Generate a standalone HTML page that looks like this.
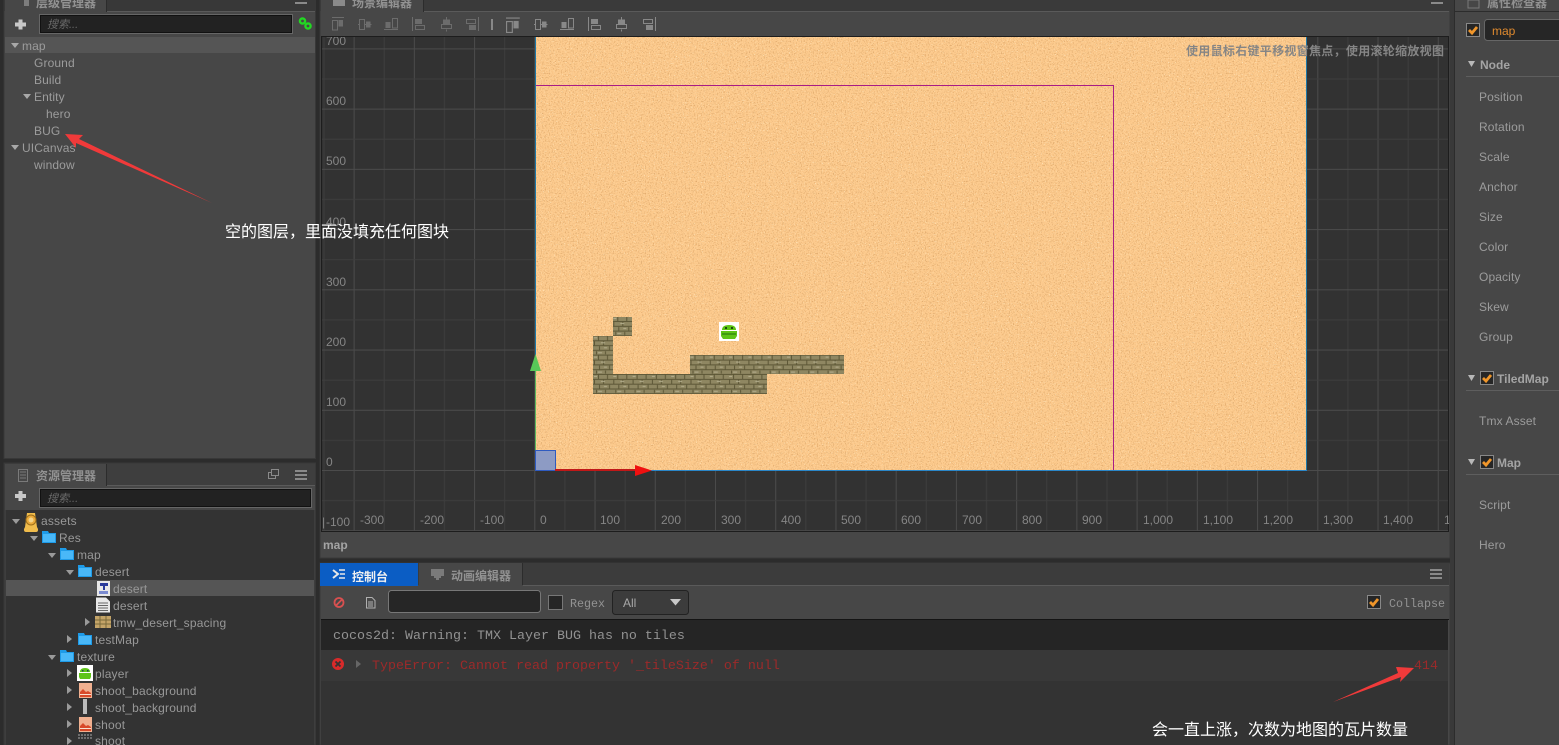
<!DOCTYPE html>
<html><head><meta charset="utf-8"><style>
html,body{margin:0;padding:0;background:#2c2c2c;width:1559px;height:745px;overflow:hidden}
svg{display:block;position:absolute;left:0;top:0}
text{font-family:"Liberation Sans","Noto Sans CJK SC",sans-serif;font-size:12px;fill:#a3a3a3;white-space:pre}
.s{fill:#9c9c9c;letter-spacing:.12px}
.as{fill:#989898;letter-spacing:.18px}
.lb{fill:#858585}
.tab{fill:#929292;font-weight:bold}
.h{fill:#a4a4a4;font-weight:bold}
.m{font-family:"Liberation Mono","Noto Sans CJK SC",monospace;font-size:13.33px;fill:#929292}
.m2{font-family:"Liberation Mono",monospace;font-size:11.67px;fill:#939393}
.e{fill:#9c2a2a}
.w{font-family:"WenQuanYi Zen Hei","Noto Sans CJK SC",sans-serif;font-size:16px;fill:#fff}
.ph{font-style:italic;fill:#6a6a6a;font-size:11px}
</style></head><body>
<svg width="1559" height="745" viewBox="0 0 1559 745" xmlns="http://www.w3.org/2000/svg">
<defs>
<pattern id="gv" x="534.3" y="0" width="60.23" height="10" patternUnits="userSpaceOnUse">
  <rect x="0" width="1" height="10" fill="#4b4b4b"/><rect x="30.1" width="1" height="10" fill="#3e3e3e"/>
</pattern>
<pattern id="gh" x="0" y="470" width="10" height="60.23" patternUnits="userSpaceOnUse">
  <rect y="0" width="10" height="1" fill="#4b4b4b"/><rect y="30.1" width="10" height="1" fill="#3e3e3e"/>
</pattern>
<pattern id="br" x="593" y="317" width="19.3" height="19.3" patternUnits="userSpaceOnUse">
  <rect width="19.3" height="19.3" fill="#8f8762"/>
  <rect y="4" width="19.3" height="1" fill="#5c5636"/><rect y="8.8" width="19.3" height="1" fill="#5c5636"/><rect y="13.6" width="19.3" height="1" fill="#5c5636"/><rect y="18.3" width="19.3" height="1" fill="#5c5636"/>
  <rect x="5" y="0" width="1" height="4" fill="#5c5636"/><rect x="14" y="0" width="1" height="4" fill="#5c5636"/>
  <rect x="1" y="5" width="1" height="4" fill="#5c5636"/><rect x="10" y="5" width="1" height="4" fill="#5c5636"/>
  <rect x="6" y="10" width="1" height="4" fill="#5c5636"/><rect x="16" y="10" width="1" height="4" fill="#5c5636"/>
  <rect x="3" y="15" width="1" height="3" fill="#5c5636"/><rect x="12" y="15" width="1" height="3" fill="#5c5636"/>
  <rect x="1" y="1" width="3" height="1" fill="#b4ae8e"/><rect x="8" y="6" width="4" height="1" fill="#b4ae8e"/><rect x="11" y="11" width="3" height="1" fill="#b4ae8e"/><rect x="5" y="16" width="4" height="1" fill="#b4ae8e"/>
</pattern>
<filter id="sandD" x="0" y="0" width="100%" height="100%" color-interpolation-filters="sRGB">
  <feTurbulence type="fractalNoise" baseFrequency="0.75" numOctaves="2" seed="4"/>
  <feColorMatrix values="0 0 0 0 0.78  0 0 0 0 0.56  0 0 0 0 0.32  3.5 0 0 0 -1.75"/>
</filter>
<filter id="sandL" x="0" y="0" width="100%" height="100%" color-interpolation-filters="sRGB">
  <feTurbulence type="fractalNoise" baseFrequency="0.85" numOctaves="1" seed="11"/>
  <feColorMatrix values="0 0 0 0 1  0 0 0 0 0.95  0 0 0 0 0.82  0 7 0 0 -4.4"/>
</filter>
<path id="d" d="M0 0h8l-4 5z"/>
<path id="r" d="M0 0l5 4-5 4z"/>
<g id="fold"><path d="M0 1h6l1 2h7v10H0z" fill="#1e9be8"/><rect x="1" y="4" width="12" height="8" fill="#49b8f8"/></g>
<g id="cb"><rect x=".5" y=".5" width="13" height="13" fill="#262626" stroke="#888"/><path d="M3 7l3 3 5-6" fill="none" stroke="#f0962a" stroke-width="2.8"/></g>
<g id="menu" fill="#8a8a8a"><rect width="12" height="2"/><rect y="4" width="12" height="2"/><rect y="8" width="12" height="2"/></g>
<g id="ai" fill="none" stroke="currentColor"><path d="M0 .5h12M.5 3.500h5v9.500h-5z"/><rect x="6.500" y="3" width="4.500" height="6.500" fill="currentColor" stroke="none"/></g>
<g id="am" fill="none" stroke="currentColor"><path d="M0 7.500h1.500M1.500 2.500h5v10h-5z"/><path d="M6.500 7.500h7"/><rect x="8" y="4.500" width="4.500" height="6" fill="currentColor" stroke="none"/></g>
<g id="ab" fill="none" stroke="currentColor"><path d="M0 12.500h14M8.500 1.500h5v9.500h-5z"/><rect x="1.500" y="5" width="5" height="6" fill="currentColor" stroke="none"/></g>
<g id="al" fill="none" stroke="currentColor"><path d="M.5 0v14M3.500 8.500h9v4h-9z"/><rect x="3" y="2" width="7" height="5" fill="currentColor" stroke="none"/></g>
<g id="ac" fill="none" stroke="currentColor"><path d="M6.500 0v2.500M6.500 12.500v2M1.500 7.500h10v4h-10z"/><rect x="3" y="2.500" width="7" height="4.500" fill="currentColor" stroke="none"/></g>
<g id="ar" fill="none" stroke="currentColor"><path d="M12.500 0v14M.5 2.500h9v4h-9z"/><rect x="3" y="8" width="7" height="5" fill="currentColor" stroke="none"/></g>
<g id="img"><rect width="13" height="15" fill="#f0b090"/><path d="M1 9l3-3 3 3 2-1 3 2v4H1z" fill="#d84a2a"/><rect x="1" y="11" width="11" height="1" fill="#f8e0d0"/></g>
<clipPath id="vp"><rect x="322" y="37" width="1127" height="493"/></clipPath>
</defs>

<rect width="1559" height="745" fill="#2c2c2c"/>

<!-- Hierarchy panel -->
<rect x="4" y="0" width="311.500" height="458.500" fill="#474747" stroke="#383838"/>
<rect x="4" y="0" width="312" height="11" fill="#383838"/>
<rect x="5" y="0" width="101" height="12" fill="#474747"/>
<rect x="106" y="0" width="1" height="12" fill="#2c2c2c"/>
<rect x="107" y="11" width="208" height="1" fill="#5a5a5a"/>
<rect x="24" y="0" width="5" height="6" fill="#7d7d7d"/>
<text class="tab" x="36" y="7">层级管理器</text>
<use href="#menu" x="295" y="-6"/>
<rect x="5" y="12" width="310" height="25" fill="#474747"/>
<path d="M18 20.500h4v3h3.500v4h-3.500v3h-4v-3h-3.500v-4h3.500z" fill="#c8c8c8" transform="translate(.5 -1)"/>
<rect x="39.500" y="14.500" width="253" height="19" fill="#262626" stroke="#666"/>
<rect x="40.500" y="15.500" width="251" height="17" fill="#222" stroke="#111"/>
<text class="ph" x="47" y="28">搜索...</text>
<g fill="none" stroke="#22d822" stroke-width="2.400"><circle cx="302.500" cy="21" r="2.600"/><circle cx="308" cy="26" r="2.600"/></g>
<rect x="5" y="37" width="310" height="16" fill="#555"/>
<use href="#d" x="11" y="43" fill="#a8a8a8"/>
<text class="s" x="22" y="50">map</text>
<text class="s" x="34" y="67">Ground</text>
<text class="s" x="34" y="84">Build</text>
<use href="#d" x="23" y="94" fill="#a8a8a8"/>
<text class="s" x="34" y="101">Entity</text>
<text class="s" x="46" y="118">hero</text>
<text class="s" x="34" y="135">BUG</text>
<use href="#d" x="11" y="145" fill="#a8a8a8"/>
<text class="s" x="22" y="152">UICanvas</text>
<text class="s" x="34" y="169">window</text>

<!-- Assets panel -->
<rect x="4" y="463" width="311.500" height="282" fill="#3e3e3e" stroke="#383838"/>
<rect x="5" y="464" width="101" height="23" fill="#474747"/>
<rect x="106" y="464" width="1" height="23" fill="#2c2c2c"/>
<rect x="107" y="485" width="208" height="1" fill="#5a5a5a"/>
<g fill="none" stroke="#7a7a7a"><rect x="18.500" y="469.500" width="9" height="12"/></g><path d="M20 472h6M20 475h6M20 478h6" stroke="#7a7a7a"/>
<text class="tab" x="36" y="480">资源管理器</text>
<g fill="none" stroke="#8a8a8a"><rect x="268.500" y="472.500" width="7" height="6"/><rect x="271.500" y="469.500" width="7" height="6" fill="#3e3e3e"/></g>
<use href="#menu" x="295" y="470"/>
<rect x="5" y="486" width="310" height="24" fill="#474747"/>
<path d="M18 491h4v3h3.500v4h-3.500v3h-4v-3h-3.500v-4h3.500z" fill="#c8c8c8" transform="translate(.5 0)"/>
<rect x="39.500" y="488.500" width="272" height="19" fill="#262626" stroke="#666"/>
<rect x="40.500" y="489.500" width="270" height="17" fill="#222" stroke="#111"/>
<text class="ph" x="47" y="502">搜索...</text>
<rect x="6" y="510" width="308" height="235" fill="#333"/>
<rect x="6" y="580" width="308" height="16" fill="#555"/>
<g fill="#9a9a9a">
<use href="#d" x="12" y="519"/><use href="#d" x="30" y="536"/><use href="#d" x="48" y="553"/><use href="#d" x="66" y="570"/><use href="#d" x="48" y="655"/>
<use href="#r" x="85" y="618"/><use href="#r" x="67" y="635"/><use href="#r" x="67" y="669"/><use href="#r" x="67" y="686"/><use href="#r" x="67" y="703"/><use href="#r" x="67" y="720"/><use href="#r" x="67" y="737"/>
</g>
<path d="M27 513h8l2 14 1 2v1q0 2-2 2H26q-2 0-2-2v-1l1-2z" fill="#f0bc4c"/><circle cx="31" cy="520" r="5" fill="#e9a93a" stroke="#9c6e1a"/><circle cx="31" cy="520" r="2.500" fill="#f4d488"/>
<use href="#fold" x="42" y="530"/><use href="#fold" x="60" y="547"/><use href="#fold" x="78" y="564"/><use href="#fold" x="78" y="632"/><use href="#fold" x="60" y="649"/>
<rect x="97" y="581" width="13" height="15" fill="#e8e8e8"/><path d="M100 583h8v3h-3v4h-2v-4h-3z" fill="#2a3a9a"/><rect x="99" y="591" width="9" height="3" fill="#7a8ad0"/>
<path d="M96 597.500h10l4 4v11H96z" fill="#e8e8e8"/><path d="M98 603h10M98 605.500h10M98 608h10M98 610.500h10" stroke="#666"/>
<rect x="95" y="616" width="16" height="12" fill="#c4a468"/><path d="M95 620h16M95 624h16M100 616v12M106 616v12" stroke="#7a6a3a"/>
<rect x="77" y="665" width="16" height="16" fill="#fff"/><path d="M80 672q0-4 5-4t5 4z" fill="#5fc41a"/><path d="M79 673h12v4l-1 2h-10l-1-2z" fill="#5fc41a"/><rect x="82" y="670" width="1.500" height="1.500" fill="#245"/><rect x="87" y="670" width="1.500" height="1.500" fill="#245"/>
<use href="#img" x="79" y="683"/>
<rect x="83" y="699" width="4" height="15" fill="#bbb"/>
<use href="#img" x="79" y="717"/>
<path d="M78 735h15M78 738h15" stroke="#aaa" stroke-dasharray="2 1"/>
<text class="as" x="41" y="525">assets</text><text class="as" x="59" y="542">Res</text><text class="as" x="77" y="559">map</text><text class="as" x="95" y="576">desert</text><text class="as" x="113" y="593">desert</text><text class="as" x="113" y="610">desert</text><text class="as" x="113" y="627">tmw_desert_spacing</text><text class="as" x="95" y="644">testMap</text><text class="as" x="77" y="661">texture</text><text class="as" x="95" y="678">player</text><text class="as" x="95" y="695">shoot_background</text><text class="as" x="95" y="712">shoot_background</text><text class="as" x="95" y="729">shoot</text><text class="as" x="95" y="745">shoot</text>

<!-- Scene panel -->
<rect x="320" y="0" width="1130" height="558" fill="#474747" stroke="#393939"/>
<rect x="320" y="0" width="1130" height="11" fill="#3a3a3a"/>
<rect x="321" y="0" width="102" height="12" fill="#474747"/>
<rect x="423" y="0" width="1" height="12" fill="#2c2c2c"/>
<rect x="424" y="11" width="1025" height="1" fill="#5a5a5a"/>
<rect x="333" y="0" width="12" height="6" fill="#8a8a8a"/>
<text class="tab" x="352" y="7">场景编辑器</text>
<use href="#menu" x="1431" y="-6"/>
<g style="color:#6c6c6c">
<use href="#ai" x="332" y="17"/><use href="#am" x="358" y="17"/><use href="#ab" x="384" y="17"/><use href="#al" x="412" y="17"/><use href="#ac" x="440" y="17"/><use href="#ar" x="466" y="17"/>
</g>
<rect x="491" y="19" width="2" height="11" fill="#888"/>
<g style="color:#888">
<use href="#ai" transform="translate(506 17.500) scale(1.150)"/><use href="#am" x="534" y="17"/><use href="#ab" x="560" y="17"/><use href="#al" x="588" y="17"/><use href="#ac" x="615" y="17"/><use href="#ar" x="643" y="17"/>
</g>
<rect x="321" y="36" width="1128" height="1" fill="#1d1d1d"/>
<rect x="322" y="37" width="1127" height="495" fill="#323232"/>
<rect x="322" y="37" width="1127" height="495" fill="url(#gv)"/>
<rect x="322" y="37" width="1127" height="495" fill="url(#gh)"/>
<rect x="321" y="37" width="1" height="495" fill="#1d1d1d"/>
<rect x="1448" y="37" width="1" height="495" fill="#1d1d1d"/>
<rect x="321" y="531" width="1128" height="1" fill="#1d1d1d"/>

<!-- Map -->
<rect x="535" y="37" width="771" height="433" fill="#fdcb8e"/>
<rect x="535" y="37" width="771" height="433" filter="url(#sandD)" opacity=".55"/>
<rect x="535" y="37" width="771" height="433" filter="url(#sandL)" opacity=".7"/>
<path d="M535.500 85.500H1113.500V470" fill="none" stroke="#a81c86"/>
<rect x="535" y="37" width="1" height="434" fill="#1c78a8"/>
<rect x="1306" y="37" width="1" height="434" fill="#1c78a8"/>
<rect x="535" y="470" width="772" height="1" fill="#2a86c8"/>
<rect x="613" y="317" width="19" height="19" fill="url(#br)"/>
<rect x="593" y="336" width="20" height="38" fill="url(#br)"/>
<rect x="593" y="374" width="174" height="20" fill="url(#br)"/>
<rect x="690" y="355" width="154" height="19" fill="url(#br)"/>
<rect x="719" y="322" width="20" height="19" fill="#fff"/>
<path d="M722 330q0-5 7-5t7 5z" fill="#5cc416"/><path d="M721 331h16v5l-2 3h-12l-2-3z" fill="#5cc416"/><rect x="722" y="333" width="14" height="2" fill="#3f9a10"/><rect x="725" y="327" width="2" height="2" fill="#1d4a10"/><rect x="731" y="327" width="2" height="2" fill="#1d4a10"/>
<rect x="535.500" y="450.500" width="20" height="20" fill="#8d9bc4" stroke="#2f5bc0"/>
<rect x="535" y="356" width="1" height="94" fill="#5cb85c"/>
<path d="M535.500 354l5.500 17h-11z" fill="#58c858"/>
<rect x="555" y="469" width="82" height="2" fill="#c01818"/>
<path d="M635 465l17 5.500-17 5.500z" fill="#f01010"/>

<!-- Grid labels -->
<g clip-path="url(#vp)">
<text class="lb" x="326" y="45">700</text><text class="lb" x="326" y="105">600</text><text class="lb" x="326" y="165">500</text><text class="lb" x="326" y="226">400</text><text class="lb" x="326" y="286">300</text><text class="lb" x="326" y="346">200</text><text class="lb" x="326" y="406">100</text><text class="lb" x="326" y="466">0</text>
<text class="lb" x="322" y="526">|</text><text class="lb" x="326" y="526">-100</text>
<text class="lb" x="360" y="524">-300</text><text class="lb" x="420" y="524">-200</text><text class="lb" x="480" y="524">-100</text><text class="lb" x="540" y="524">0</text><text class="lb" x="600" y="524">100</text><text class="lb" x="661" y="524">200</text><text class="lb" x="721" y="524">300</text><text class="lb" x="781" y="524">400</text><text class="lb" x="841" y="524">500</text><text class="lb" x="901" y="524">600</text><text class="lb" x="962" y="524">700</text><text class="lb" x="1022" y="524">800</text><text class="lb" x="1082" y="524">900</text><text class="lb" x="1143" y="524">1,000</text><text class="lb" x="1203" y="524">1,100</text><text class="lb" x="1263" y="524">1,200</text><text class="lb" x="1323" y="524">1,300</text><text class="lb" x="1383" y="524">1,400</text><text class="lb" x="1444" y="524">1,500</text>
</g>
<text x="1186" y="55" textLength="258" style="fill:#858585;font-weight:bold">使用鼠标右键平移视窗焦点，使用滚轮缩放视图</text>
<text class="h" x="323" y="549">map</text>

<!-- Console -->
<rect x="320" y="563" width="1130" height="182" fill="#474747" stroke="#393939"/>
<rect x="321" y="563" width="1128" height="22" fill="#3c3c3c"/>
<rect x="320" y="563" width="98" height="23" fill="#0b5dc4"/>
<rect x="419" y="563" width="103" height="22" fill="#474747"/>
<rect x="522" y="563" width="1" height="22" fill="#2c2c2c"/>
<rect x="523" y="585" width="926" height="1" fill="#5a5a5a"/>
<path d="M333 570l5 4-5 4" fill="none" stroke="#e8e8e8" stroke-width="2"/><path d="M339 570h6M340 574h5M339 578h6" stroke="#e8e8e8" stroke-width="1.500"/>
<text x="352" y="581" style="fill:#f0f0f0;font-weight:bold">控制台</text>
<path d="M431 569h13v7h-3v2h-2v2h-3v-2h-2v-2h-3z" fill="#7a7a7a"/>
<text class="tab" x="451" y="580">动画编辑器</text>
<use href="#menu" x="1430" y="569"/>
<circle cx="339" cy="602.500" r="4.500" fill="none" stroke="#d85050" stroke-width="1.800"/><path d="M336 605.500l6-6" stroke="#d85050" stroke-width="1.800"/>
<path d="M366.500 597.500h5.500l3 3v7.500h-8.500z" fill="none" stroke="#b0b0b0"/><path d="M368 602h5M368 604h5M368 606h5" stroke="#b0b0b0"/>
<rect x="388.500" y="590.500" width="152" height="22" rx="3" fill="#262626" stroke="#777"/>
<rect x="548.500" y="595.500" width="14" height="14" fill="#262626" stroke="#777"/>
<text class="m2" x="570" y="607">Regex</text>
<rect x="612.500" y="590.500" width="76" height="24" rx="3" fill="#3c3c3c" stroke="#222"/>
<text x="623" y="607" style="fill:#a8a8a8">All</text>
<path d="M670 599h11l-5.500 6.500z" fill="#c8c8c8"/>
<use href="#cb" x="1367" y="595"/>
<text class="m2" x="1389" y="607">Collapse</text>
<rect x="321" y="619" width="1128" height="1" fill="#141414"/>
<rect x="321" y="620" width="1127" height="125" fill="#333"/>
<rect x="321" y="620" width="1127" height="30" fill="#252525"/>
<rect x="321" y="650" width="1127" height="31" fill="#383838"/>
<text class="m" x="333" y="639">cocos2d: Warning: TMX Layer BUG has no tiles</text>
<circle cx="338" cy="664" r="6" fill="#d82a2a"/><path d="M335.500 661.500l5 5M340.500 661.500l-5 5" stroke="#333" stroke-width="1.800"/>
<path d="M356 660l5 4-5 4z" fill="#666"/>
<text class="m e" x="372" y="669">TypeError: Cannot read property '_tileSize' of null</text>
<text class="m e" x="1414" y="669">414</text>

<!-- Inspector -->
<rect x="1455" y="0" width="104" height="745" fill="#474747"/>
<rect x="1450" y="0" width="5" height="745" fill="#393939"/>
<rect x="1454" y="0" width="1" height="745" fill="#2c2c2c"/>
<rect x="1468" y="0" width="11" height="8" fill="none" stroke="#7a7a7a"/>
<text class="tab" x="1487" y="7">属性检查器</text>
<rect x="1455" y="11" width="104" height="1" fill="#2c2c2c"/>
<use href="#cb" x="1466" y="23"/>
<rect x="1484.500" y="19.500" width="80" height="21" rx="3" fill="#262626" stroke="#666"/>
<text x="1492" y="35" style="fill:#e08a2e">map</text>
<path d="M1468 61h7l-3.500 6z" fill="#b8b8b8"/><text class="h" x="1480" y="69">Node</text>
<rect x="1466" y="76" width="93" height="1" fill="#5e5e5e"/>
<text class="s" x="1479" y="101">Position</text><text class="s" x="1479" y="131">Rotation</text><text class="s" x="1479" y="161">Scale</text><text class="s" x="1479" y="191">Anchor</text><text class="s" x="1479" y="221">Size</text><text class="s" x="1479" y="251">Color</text><text class="s" x="1479" y="281">Opacity</text><text class="s" x="1479" y="311">Skew</text><text class="s" x="1479" y="341">Group</text>
<path d="M1468 375h7l-3.500 6z" fill="#b8b8b8"/><use href="#cb" x="1480" y="371"/><text class="h" x="1497" y="383">TiledMap</text>
<rect x="1466" y="390" width="93" height="1" fill="#5e5e5e"/>
<text class="s" x="1479" y="425">Tmx Asset</text>
<path d="M1468 459h7l-3.500 6z" fill="#b8b8b8"/><use href="#cb" x="1480" y="455"/><text class="h" x="1497" y="467">Map</text>
<rect x="1466" y="474" width="93" height="1" fill="#5e5e5e"/>
<text class="s" x="1479" y="509">Script</text><text class="s" x="1479" y="549">Hero</text>

<!-- Annotations -->
<path d="M65 134L83 135L79 139L212 203L76 143L76 148z" fill="#f03a3a"/>
<path d="M1414 668L1396 667L1398 673L1333 702L1401 677L1400 682z" fill="#f03a3a"/>
<text class="w" x="225" y="237">空的图层，里面没填充任何图块</text>
<text class="w" x="1152" y="735">会一直上涨，次数为地图的瓦片数量</text>
</svg>
</body></html>
